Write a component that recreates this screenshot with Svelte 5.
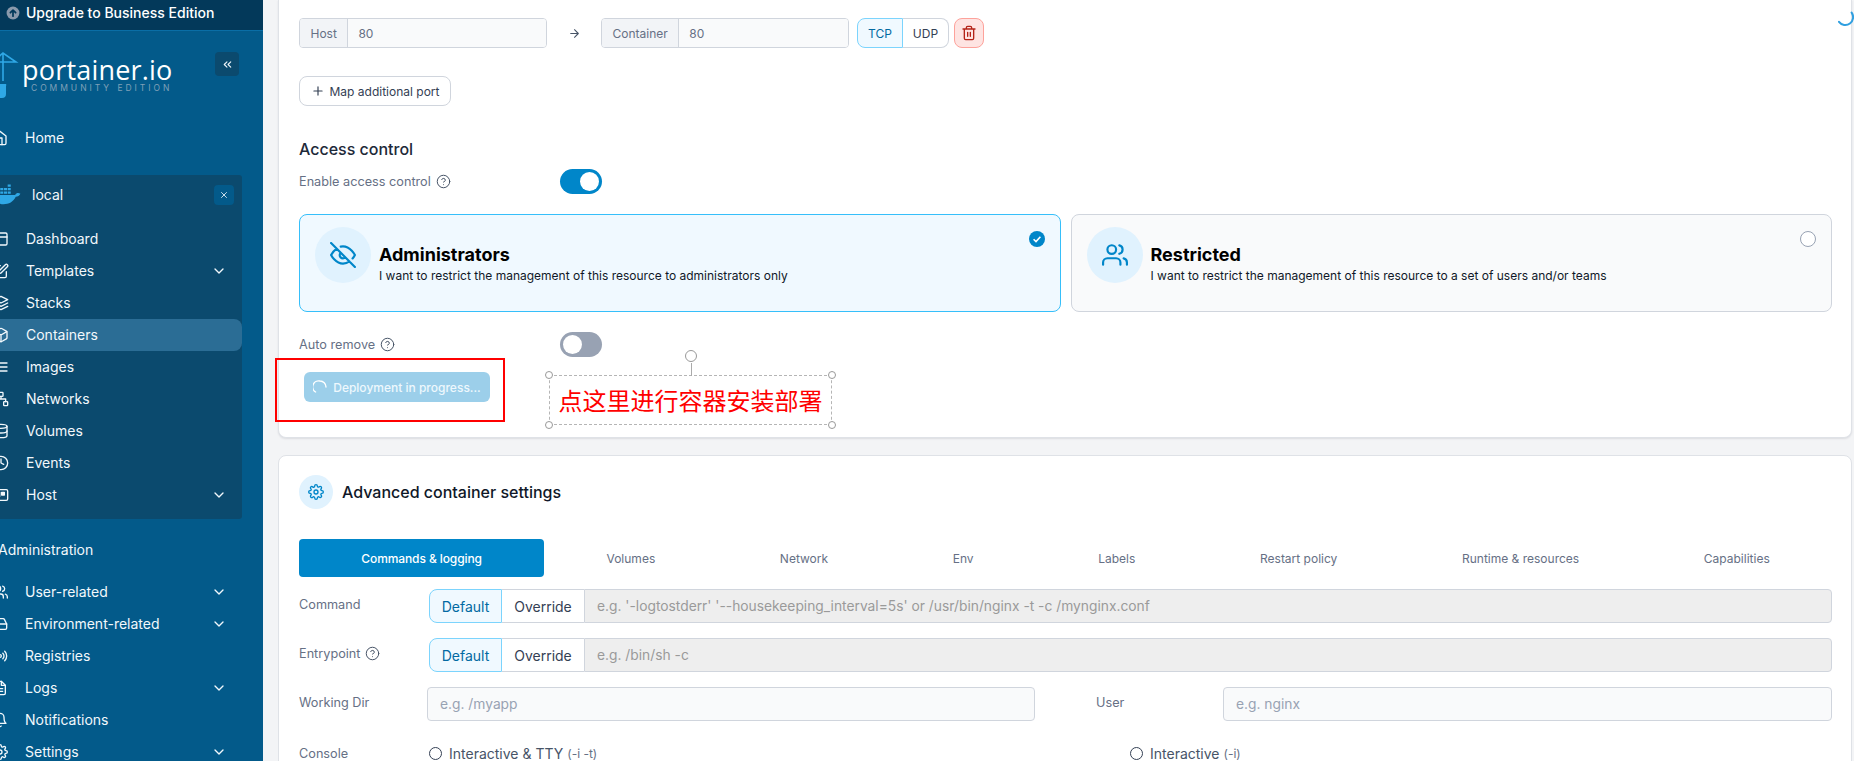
<script>
	const icons = {
		up: '<circle cx="12" cy="12" r="11" fill="#8a99ab" stroke="none"/><path d="M12 17.5V7M7.5 11.5 12 7l4.5 4.5" stroke="#03395a" stroke-width="3"/>',
		home: '<path d="M3 9l9-7 9 7v11a2 2 0 0 1-2 2H5a2 2 0 0 1-2-2z"/><path d="M9 22V12h6v10"/>',
		layout: '<rect x="3" y="3" width="18" height="18" rx="2"/><path d="M3 9h18M9 21V9"/>',
		edit: '<path d="M11 4H4a2 2 0 0 0-2 2v14a2 2 0 0 0 2 2h14a2 2 0 0 0 2-2v-7"/><path d="M18.5 2.5a2.121 2.121 0 0 1 3 3L12 15l-4 1 1-4 9.5-9.5z"/>',
		layers: '<path d="M12 2 2 7l10 5 10-5-10-5z"/><path d="m2 12 10 5 10-5M2 17l10 5 10-5"/>',
		box: '<path d="M21 16V8a2 2 0 0 0-1-1.73l-7-4a2 2 0 0 0-2 0l-7 4A2 2 0 0 0 3 8v8a2 2 0 0 0 1 1.73l7 4a2 2 0 0 0 2 0l7-4A2 2 0 0 0 21 16z"/><path d="M3.27 6.96 12 12.01l8.73-5.05M12 22.08V12"/>',
		list: '<path d="M3 6h18M3 12h18M3 18h18"/>',
		network: '<rect x="9" y="2" width="6" height="6" rx="1"/><rect x="2" y="16" width="6" height="6" rx="1"/><rect x="16" y="16" width="6" height="6" rx="1"/><path d="M12 8v4M5 16v-4h14v4"/>',
		database: '<ellipse cx="12" cy="5" rx="9" ry="3"/><path d="M21 12c0 1.66-4 3-9 3s-9-1.34-9-3"/><path d="M3 5v14c0 1.66 4 3 9 3s9-1.34 9-3V5"/>',
		clock: '<circle cx="12" cy="12" r="10"/><path d="M12 6v6l4 2"/>',
		host: '<rect x="2" y="4" width="20" height="16" rx="2"/><path d="M6 8h4v6H6zM13 8h4v4h-4z" fill="currentColor"/>',
		users: '<path d="M17 21v-2a4 4 0 0 0-4-4H5a4 4 0 0 0-4 4v2"/><circle cx="9" cy="7" r="4"/><path d="M23 21v-2a4 4 0 0 0-3-3.87M16 3.13a4 4 0 0 1 0 7.75"/>',
		drive: '<path d="M22 12H2"/><path d="M5.45 5.11 2 12v6a2 2 0 0 0 2 2h16a2 2 0 0 0 2-2v-6l-3.45-6.89A2 2 0 0 0 16.76 4H7.24a2 2 0 0 0-1.79 1.11z"/><path d="M6 16h.01M10 16h.01"/>',
		radio: '<circle cx="12" cy="12" r="2"/><path d="M16.24 7.76a6 6 0 0 1 0 8.49M19.07 4.93a10 10 0 0 1 0 14.14M7.76 16.24a6 6 0 0 1 0-8.49M4.93 19.07a10 10 0 0 1 0-14.14"/>',
		file: '<path d="M14 2H6a2 2 0 0 0-2 2v16a2 2 0 0 0 2 2h12a2 2 0 0 0 2-2V8z"/><path d="M14 2v6h6M16 13H8M16 17H8M10 9H8"/>',
		bell: '<path d="M18 8A6 6 0 0 0 6 8c0 7-3 9-3 9h18s-3-2-3-9"/><path d="M13.73 21a2 2 0 0 1-3.46 0"/>',
		gear: '<circle cx="12" cy="12" r="3"/><path d="M19.4 15a1.65 1.65 0 0 0 .33 1.82l.06.06a2 2 0 1 1-2.83 2.83l-.06-.06a1.65 1.65 0 0 0-2.82 1.17V21a2 2 0 1 1-4 0v-.09A1.65 1.65 0 0 0 7.2 19.7l-.06.06a2 2 0 1 1-2.83-2.83l.06-.06a1.65 1.65 0 0 0-1.17-2.82H3a2 2 0 1 1 0-4h.09A1.65 1.65 0 0 0 4.3 7.2l-.06-.06a2 2 0 1 1 2.83-2.83l.06.06a1.65 1.65 0 0 0 1.82.33H9a1.65 1.65 0 0 0 1-1.51V3a2 2 0 1 1 4 0v.09a1.65 1.65 0 0 0 2.82 1.17l.06-.06a2 2 0 1 1 2.83 2.83l-.06.06a1.65 1.65 0 0 0-.33 1.82V9a1.65 1.65 0 0 0 1.51 1H21a2 2 0 1 1 0 4h-.09a1.65 1.65 0 0 0-1.51 1z"/>',
		chevron: '<path d="m6 9 6 6 6-6"/>',
		chevrons: '<path d="m11 17-5-5 5-5M18 17l-5-5 5-5"/>',
		close: '<path d="M18 6 6 18M6 6l12 12"/>',
		arrow: '<path d="M5 12h14M12 5l7 7-7 7"/>',
		plus: '<path d="M12 5v14M5 12h14"/>',
		trash: '<path d="M3 6h18M19 6v14a2 2 0 0 1-2 2H7a2 2 0 0 1-2-2V6m3 0V4a2 2 0 0 1 2-2h4a2 2 0 0 1 2 2v2M10 11v6M14 11v6"/>',
		help: '<circle cx="12" cy="12" r="10"/><path d="M9.09 9a3 3 0 0 1 5.83 1c0 2-3 3-3 3M12 17h.01"/>',
		eyeoff: '<path d="M17.94 17.94A10.07 10.07 0 0 1 12 20c-7 0-11-8-11-8a18.45 18.45 0 0 1 5.06-5.94M9.9 4.24A9.12 9.12 0 0 1 12 4c7 0 11 8 11 8a18.5 18.5 0 0 1-2.16 3.19m-6.72-1.07a3 3 0 1 1-4.24-4.24M1 1l22 22"/>',
		whale: '<path d="M1 12h18c1-2 3-2 4.5-1-.8 1.8-2.2 2.6-4 2.6C17.5 18 13.5 20 9 20c-5 0-7.5-3-8-8z" fill="currentColor" stroke="none"/><path d="M3 9h2.6v2H3zM6.2 9h2.6v2H6.2zM9.4 9H12v2H9.4zM12.6 9h2.6v2h-2.6zM6.2 6h2.6v2H6.2zM9.4 6H12v2H9.4zM12.6 6h2.6v2h-2.6zM12.6 3h2.6v2h-2.6z" fill="currentColor" stroke="none"/>'
	};

	const envItems = [
		{ label: 'Dashboard', icon: 'layout' },
		{ label: 'Templates', icon: 'edit', more: true },
		{ label: 'Stacks', icon: 'layers' },
		{ label: 'Containers', icon: 'box', active: true },
		{ label: 'Images', icon: 'list' },
		{ label: 'Networks', icon: 'network' },
		{ label: 'Volumes', icon: 'database' },
		{ label: 'Events', icon: 'clock' },
		{ label: 'Host', icon: 'host', more: true }
	];

	const adminItems = [
		{ label: 'User-related', icon: 'users', more: true },
		{ label: 'Environment-related', icon: 'drive', more: true },
		{ label: 'Registries', icon: 'radio' },
		{ label: 'Logs', icon: 'file', more: true },
		{ label: 'Notifications', icon: 'bell' },
		{ label: 'Settings', icon: 'gear', more: true }
	];

	const tabs = ['Commands & logging', 'Volumes', 'Network', 'Env', 'Labels', 'Restart policy', 'Runtime & resources', 'Capabilities'];
</script>

{#snippet icon(name, size = 16)}
	<svg class="icon" width={size} height={size} viewBox="0 0 24 24" fill="none" stroke="currentColor" stroke-width="2" stroke-linecap="round" stroke-linejoin="round">{@html icons[name]}</svg>
{/snippet}

{#snippet navRow(item)}
	<div class="nav-row" class:active={item.active}>
		{@render icon(item.icon)}
		<span class="nav-label">{item.label}</span>
		{#if item.more}
			<span class="nav-more">{@render icon('chevron')}</span>
		{/if}
	</div>
{/snippet}

<div class="page">
	<aside class="sidebar">
		<div class="upgrade">
			{@render icon('up', 14)}
			<span>Upgrade to Business Edition</span>
		</div>

		<div class="brand">
			<svg class="crane" width="17" height="46" viewBox="0 0 17 46" fill="none" stroke="#2fa8e6" stroke-width="1.6">
				<path d="M-6 9 3 1l13 9H-6zM3 1v28M-1 10v18" />
				<path d="M-3 32h9a2 2 0 0 1 0 2v8a4 4 0 0 1-4 4h-5z" fill="#2fa8e6" stroke="none" />
			</svg>
			<div class="brand-text">
				<div class="brand-name">portainer.io</div>
				<div class="brand-edition">COMMUNITY EDITION</div>
			</div>
			<div class="collapse">{@render icon('chevrons', 13)}</div>
		</div>

		<nav class="nav">
			<div class="top-rows">
				{@render navRow({ label: 'Home', icon: 'home' })}
			</div>

			<div class="env-panel">
				<div class="env-head">
					<span class="whale">{@render icon('whale', 28)}</span>
					<span class="env-name">local</span>
					<span class="env-close">{@render icon('close', 10)}</span>
				</div>
				{#each envItems as item}
					{@render navRow(item)}
				{/each}
			</div>

			<div class="admin-title">Administration</div>
			<div class="top-rows">
				{#each adminItems as item}
					{@render navRow(item)}
				{/each}
			</div>
		</nav>
	</aside>

	<main class="main">
		<section class="card first">
			<div class="port-row">
				<div class="input-group port">
					<span class="addon">Host</span>
					<span class="field">80</span>
				</div>
				<span class="port-arrow">{@render icon('arrow', 13)}</span>
				<div class="input-group port">
					<span class="addon">Container</span>
					<span class="field">80</span>
				</div>
				<div class="btn-group proto">
					<span class="seg on">TCP</span>
					<span class="seg">UDP</span>
				</div>
				<span class="trash">{@render icon('trash', 16)}</span>
			</div>

			<div class="map-btn">{@render icon('plus', 14)}<span>Map additional port</span></div>

			<h3 class="access-title">Access control</h3>

			<div class="switch-row">
				<span class="switch-label">Enable access control {@render icon('help', 15)}</span>
				<span class="toggle on"><i></i></span>
			</div>

			<div class="choices">
				<div class="choice selected">
					<span class="choice-icon">{@render icon('eyeoff', 26)}</span>
					<div class="choice-text">
						<div class="choice-title">Administrators</div>
						<div class="choice-desc">I want to restrict the management of this resource to administrators only</div>
					</div>
					<span class="choice-check">
						<svg width="16" height="16" viewBox="0 0 16 16"><circle cx="8" cy="8" r="8" fill="#0086c9" /><path d="m4.6 8.2 2.4 2.4 4.4-4.8" fill="none" stroke="#fff" stroke-width="1.6" /></svg>
					</span>
				</div>
				<div class="choice">
					<span class="choice-icon">{@render icon('users', 26)}</span>
					<div class="choice-text">
						<div class="choice-title">Restricted</div>
						<div class="choice-desc">I want to restrict the management of this resource to a set of users and/or teams</div>
					</div>
					<span class="choice-radio"></span>
				</div>
			</div>

			<div class="switch-row auto">
				<span class="switch-label">Auto remove {@render icon('help', 15)}</span>
				<span class="toggle"><i></i></span>
			</div>

			<div class="deploy-btn">
				<svg class="spin" width="14" height="14" viewBox="0 0 14 14" fill="none" stroke="#fff" stroke-width="1.4" stroke-linecap="round"><path d="M2.6 12A6 6 0 0 1 7 1a6 6 0 0 1 6 6" /></svg>
				<span>Deployment in progress...</span>
			</div>

			<div class="note-rect"></div>
			<div class="note-box">
				<span class="note-line"></span>
				<span class="note-knob"></span>
				<span class="corner tl"></span>
				<span class="corner tr"></span>
				<span class="corner bl"></span>
				<span class="corner br"></span>
				<span class="note-text">点这里进行容器安装部署</span>
			</div>
		</section>

		<section class="card second">
			<div class="adv-head">
				<span class="adv-icon">{@render icon('gear', 16)}</span>
				<h3>Advanced container settings</h3>
			</div>

			<div class="tabs">
				{#each tabs as tab, i}
					<span class="tab" class:current={i === 0}>{tab}</span>
				{/each}
			</div>

			<div class="form-row">
				<span class="form-label">Command</span>
				<div class="btn-group cmd">
					<span class="seg on">Default</span>
					<span class="seg">Override</span>
				</div>
				<span class="field disabled">e.g. '-logtostderr' '--housekeeping_interval=5s' or /usr/bin/nginx -t -c /mynginx.conf</span>
			</div>

			<div class="form-row">
				<span class="form-label">Entrypoint {@render icon('help', 15)}</span>
				<div class="btn-group cmd">
					<span class="seg on">Default</span>
					<span class="seg">Override</span>
				</div>
				<span class="field disabled">e.g. /bin/sh -c</span>
			</div>

			<div class="form-row">
				<span class="form-label short">Working Dir</span>
				<span class="field box workdir">e.g. /myapp</span>
				<span class="form-label user">User</span>
				<span class="field box">e.g. nginx</span>
			</div>

			<div class="form-row console">
				<span class="form-label">Console</span>
				<span class="radio-item tty"><i></i>Interactive &amp; TTY <small>(-i -t)</small></span>
				<span class="radio-item"><i></i>Interactive <small>(-i)</small></span>
			</div>
		</section>
	</main>

	<svg class="page-spinner" width="18" height="18" viewBox="0 0 18 18" fill="none" stroke="#2f9fe0" stroke-width="2" stroke-linecap="round"><path d="M15.6 2.6A7 7 0 0 1 3 11.8" /></svg>
</div>

<style>
	:global(body) {
		margin: 0;
		overflow: hidden;
		background: #f3f4f6;
		font-family: Inter, "Liberation Sans", sans-serif;
	}

	.page {
		display: flex;
		height: 761px;
		overflow: hidden;
		position: relative;
	}

	.icon {
		flex: none;
		display: block;
	}

	/* Sidebar */
	.sidebar {
		width: 263px;
		flex: none;
		background: #035a8a;
		color: #f2f8fc;
		overflow: hidden;
	}

	.upgrade {
		height: 31px;
		box-sizing: border-box;
		background: #03395a;
		border-bottom: 1px solid #0a6ea6;
		display: flex;
		align-items: center;
		gap: 6px;
		padding: 0 0 5px 6px;
		font-size: 14px;
		font-weight: 500;
		color: #fff;
	}

	.brand {
		height: 91px;
		box-sizing: border-box;
		padding-top: 21px;
		display: flex;
		align-items: flex-start;
		position: relative;
	}

	.crane {
		flex: none;
		overflow: visible;
	}

	.brand-text {
		margin-left: 5px;
		padding-top: 4px;
		width: 160px;
	}

	.brand-name {
		font-family: "Open Sans", sans-serif;
		font-size: 27px;
		line-height: 28px;
		color: #fff;
		letter-spacing: 0.2px;
	}

	.brand-edition {
		font-size: 8.5px;
		line-height: 8px;
		letter-spacing: 2.95px;
		color: #7fa0b8;
		margin-left: 9px;
		white-space: nowrap;
	}

	.collapse {
		position: absolute;
		left: 215px;
		top: 21px;
		width: 24px;
		height: 24px;
		border-radius: 4px;
		background: #0b4a6e;
		display: flex;
		align-items: center;
		justify-content: center;
	}

	.nav {
		margin-left: -7px;
	}

	.top-rows {
		margin-left: -1px;
		width: 250px;
	}

	.nav-row {
		height: 32px;
		display: flex;
		align-items: center;
		gap: 17px;
		font-size: 14px;
		padding: 0 15px 1px 0;
		box-sizing: border-box;
	}

	.nav-row.active {
		background: #2b6d95;
		border-radius: 8px;
	}

	.nav-more {
		margin-left: auto;
	}

	.env-panel {
		margin-top: 21px;
		width: 249px;
		height: 344px;
		box-sizing: border-box;
		background: #0b4a6e;
		border-radius: 3px;
	}

	.env-head {
		height: 48px;
		display: flex;
		align-items: flex-start;
		padding-top: 10px;
		box-sizing: border-box;
		position: relative;
		font-size: 14px;
	}

	.whale {
		color: #2fa8e6;
		margin-top: -4px;
	}

	.env-name {
		margin-left: 11px;
		line-height: 20px;
	}

	.env-close {
		position: absolute;
		left: 221px;
		top: 10px;
		width: 20px;
		height: 20px;
		border-radius: 4px;
		background: #035a8a;
		display: flex;
		align-items: center;
		justify-content: center;
	}

	.admin-title {
		font-size: 14px;
		line-height: 20px;
		margin: 21px 0 16px 5px;
	}

	/* Main column */
	.main {
		flex: 1;
		min-width: 0;
		padding: 0 2px 0 15px;
	}

	.card {
		background: #fff;
		border: 1px solid #dfe2e7;
		box-sizing: border-box;
		padding-left: 20px;
		padding-right: 19px;
		position: relative;
	}

	.first {
		height: 438px;
		border-top: 0;
		border-radius: 0 0 8px 8px;
		padding-top: 18px;
		box-shadow: 0 1px 2px rgba(16, 24, 40, 0.1);
	}

	.second {
		margin-top: 17px;
		height: 320px;
		border-radius: 8px 8px 0 0;
		padding-top: 19px;
	}

	.port-row {
		display: flex;
		align-items: stretch;
		height: 30px;
	}

	.input-group {
		display: flex;
		box-sizing: border-box;
		border: 1px solid #d0d5dd;
		border-radius: 4px;
		overflow: hidden;
		font-size: 12px;
	}

	.port {
		width: 248px;
	}

	.addon {
		padding: 0 10.5px;
		display: flex;
		align-items: center;
		background: #f2f4f7;
		border-right: 1px solid #d0d5dd;
		color: #667085;
	}

	.input-group .field {
		flex: 1;
		display: flex;
		align-items: center;
		padding-left: 10px;
		background: #f9fafb;
		color: #667085;
	}

	.port-arrow {
		width: 54px;
		display: flex;
		align-items: center;
		justify-content: center;
		color: #475467;
	}

	.btn-group {
		display: flex;
		font-size: 12px;
		color: #344054;
	}

	.seg {
		display: flex;
		align-items: center;
		justify-content: center;
		box-sizing: border-box;
		background: #fff;
		border: 1px solid #d0d5dd;
		border-left: 0;
	}

	.seg:last-child {
		border-radius: 0 8px 8px 0;
	}

	.seg.on {
		background: #f0f9ff;
		border: 1px solid #7cd4fd;
		border-radius: 8px 0 0 8px;
		color: #026aa2;
	}

	.proto {
		margin-left: 8px;
	}

	.proto .seg {
		width: 46px;
	}

	.trash {
		margin-left: 5px;
		width: 30px;
		box-sizing: border-box;
		background: #fee4e2;
		border: 1px solid #fda29b;
		border-radius: 8px;
		color: #b42318;
		display: flex;
		align-items: center;
		justify-content: center;
	}

	.map-btn {
		margin-top: 28px;
		width: 152px;
		height: 30px;
		box-sizing: border-box;
		border: 1px solid #d0d5dd;
		border-radius: 8px;
		display: flex;
		align-items: center;
		justify-content: center;
		gap: 5px;
		font-size: 12px;
		color: #344054;
	}

	.access-title {
		margin: 33px 0 0;
		font-size: 16px;
		font-weight: 500;
		line-height: 20px;
		color: #1d2939;
	}

	.switch-row {
		display: flex;
		align-items: center;
		height: 25px;
		margin-top: 10px;
	}

	.switch-row.auto {
		margin-top: 20px;
	}

	.switch-label {
		width: 261px;
		display: flex;
		align-items: center;
		gap: 5px;
		font-size: 12.7px;
		color: #667085;
	}

	.switch-label :global(svg) {
		color: #475467;
		stroke-width: 1.6;
	}

	.toggle {
		width: 42px;
		height: 25px;
		border-radius: 13px;
		background: #98a2b3;
		display: flex;
		align-items: center;
		padding: 0 3px;
		box-sizing: border-box;
	}

	.toggle i {
		width: 19px;
		height: 19px;
		border-radius: 50%;
		background: #fff;
	}

	.toggle.on {
		background: #0086c9;
		justify-content: flex-end;
	}

	.choices {
		display: flex;
		gap: 10px;
		margin-top: 20px;
	}

	.choice {
		flex: 1;
		height: 98px;
		box-sizing: border-box;
		border: 1px solid #d0d5dd;
		border-radius: 8px;
		background: #f9fafb;
		padding: 12px 15px;
		display: flex;
		gap: 8px;
		position: relative;
	}

	.choice.selected {
		background: #f0f9ff;
		border-color: #36bffa;
	}

	.choice-icon {
		width: 56px;
		height: 56px;
		flex: none;
		border-radius: 50%;
		background: #e0f2fe;
		color: #0086c9;
		display: flex;
		align-items: center;
		justify-content: center;
	}

	.choice-text {
		padding-top: 17px;
	}

	.choice-title {
		font-size: 18px;
		font-weight: 700;
		line-height: 22px;
		color: #000;
	}

	.choice-desc {
		font-size: 12px;
		line-height: 18px;
		margin-top: 1px;
		color: #101828;
	}

	.choice-check,
	.choice-radio {
		position: absolute;
		right: 15px;
		top: 16px;
		width: 16px;
		height: 16px;
	}

	.choice-check svg {
		display: block;
	}

	.choice-radio {
		box-sizing: border-box;
		border: 1px solid #98a2b3;
		border-radius: 50%;
		background: #fff;
	}

	.deploy-btn {
		margin: 15px 0 0 5px;
		width: 186px;
		height: 30px;
		border-radius: 6px;
		background: #9ccfea;
		color: #eef8fd;
		font-size: 12px;
		font-weight: 500;
		display: flex;
		align-items: center;
		justify-content: center;
		gap: 6px;
	}

	/* Annotations drawn over the page */
	.note-rect {
		position: absolute;
		left: -4px;
		top: 358px;
		width: 230px;
		height: 64px;
		box-sizing: border-box;
		border: 2px solid #f00;
	}

	.note-box {
		position: absolute;
		left: 270px;
		top: 375px;
		width: 283px;
		height: 50px;
		box-sizing: border-box;
		border: 1.5px dashed #b5b5b5;
		display: flex;
		align-items: center;
		justify-content: center;
	}

	.note-text {
		color: #f00;
		font-family: "Noto Sans CJK SC", sans-serif;
		font-size: 24px;
		line-height: 50px;
		white-space: nowrap;
	}

	.note-line {
		position: absolute;
		left: 50%;
		top: -13px;
		width: 1px;
		height: 13px;
		background: #aaa;
	}

	.note-knob {
		position: absolute;
		left: calc(50% - 6px);
		top: -26px;
		width: 12px;
		height: 12px;
		box-sizing: border-box;
		border: 1.5px solid #999;
		border-radius: 50%;
		background: #fff;
	}

	.corner {
		position: absolute;
		width: 8px;
		height: 8px;
		box-sizing: border-box;
		border: 1.5px solid #999;
		border-radius: 50%;
		background: #fff;
	}

	.tl { left: -5px; top: -5px; }
	.tr { right: -5px; top: -5px; }
	.bl { left: -5px; bottom: -5px; }
	.br { right: -5px; bottom: -5px; }

	.adv-head {
		display: flex;
		align-items: center;
		gap: 9px;
	}

	.adv-head h3 {
		margin: 0;
		font-size: 16px;
		font-weight: 500;
		color: #101828;
	}

	.adv-icon {
		width: 34px;
		height: 34px;
		border-radius: 50%;
		background: #e0f2fe;
		color: #0086c9;
		display: flex;
		align-items: center;
		justify-content: center;
	}

	.tabs {
		display: flex;
		margin-top: 30px;
	}

	.tab {
		flex: 1 1 auto;
		height: 38px;
		display: flex;
		align-items: center;
		justify-content: center;
		font-size: 12px;
		color: #667085;
		border-radius: 4px;
		white-space: nowrap;
	}

	.tab.current {
		background: #0086c9;
		color: #fff;
		font-weight: 500;
		letter-spacing: -0.1px;
	}

	.form-row {
		display: flex;
		align-items: stretch;
		height: 34px;
		margin-top: 15px;
	}

	.tabs + .form-row {
		margin-top: 12px;
	}

	.form-label {
		width: 130px;
		flex: none;
		display: flex;
		align-items: center;
		gap: 5px;
		font-size: 12.7px;
		color: #667085;
		padding-bottom: 4px;
		box-sizing: border-box;
	}

	.form-label :global(svg) {
		color: #475467;
		stroke-width: 1.6;
	}

	.form-label.short {
		width: 128px;
	}

	.form-label.user {
		width: 127px;
		margin-left: 61px;
	}

	.cmd {
		font-size: 14px;
		flex: none;
	}

	.cmd .seg:first-child {
		width: 73px;
	}

	.cmd .seg:last-child {
		width: 82px;
		border-radius: 0;
		border-right: 0;
	}

	.form-row > .field {
		flex: 1;
		min-width: 0;
		box-sizing: border-box;
		display: flex;
		align-items: center;
		padding-left: 12px;
		font-size: 13.8px;
		color: #98a2b3;
		border: 1px solid #d0d5dd;
		border-radius: 0 4px 4px 0;
	}

	.form-row > .field.disabled {
		background: #eeeeee;
		color: #9a9a9a;
	}

	.form-row > .field.box {
		background: #f9fafb;
		border-radius: 4px;
	}

	.workdir {
		flex: none !important;
		width: 608px;
	}

	.console {
		align-items: center;
		height: 20px;
		margin-top: 22px;
	}

	.console .form-label {
		padding-bottom: 0;
	}

	.radio-item {
		display: flex;
		align-items: center;
		font-size: 14px;
		color: #475467;
		white-space: nowrap;
	}

	.radio-item.tty {
		width: 701px;
	}

	.radio-item i {
		width: 13px;
		height: 13px;
		margin-right: 7px;
		box-sizing: border-box;
		border: 1px solid #344054;
		border-radius: 50%;
		background: #fff;
	}

	.radio-item small {
		font-size: 12px;
		color: #667085;
		margin-left: 4px;
	}

	.page-spinner {
		position: absolute;
		left: 1836px;
		top: 10px;
	}
</style>
